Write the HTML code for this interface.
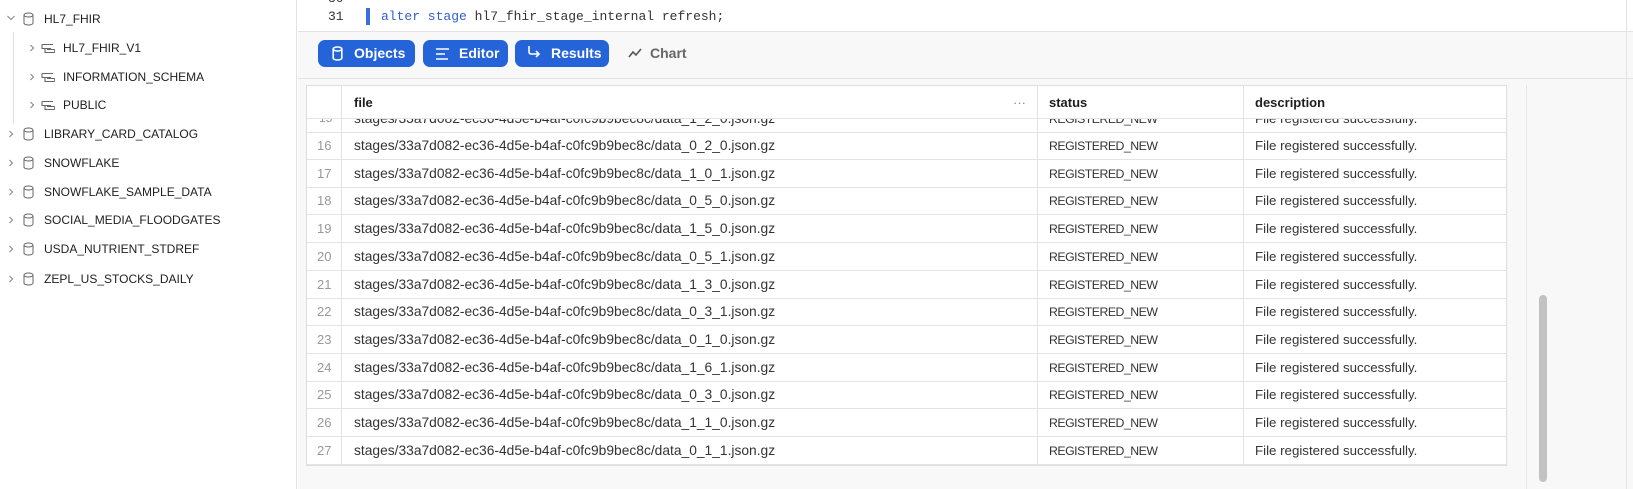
<!DOCTYPE html>
<html><head><meta charset="utf-8"><style>
*{box-sizing:border-box;margin:0;padding:0}
body{width:1633px;height:489px;overflow:hidden;background:#fff;font-family:"Liberation Sans",sans-serif;font-size:12px;color:#1e1e1e;position:relative}
.side{position:absolute;left:0;top:0;width:297px;height:489px;background:#fff;border-right:1px solid #e3e3e3}
.it{position:absolute;height:20px;line-height:20px;font-size:12px;color:#1e1e1e}
.chev{position:absolute}
.main{position:absolute;left:298px;top:0;right:0;bottom:0;background:#f8f8f8}
.editor{position:absolute;left:0;top:0;right:0;height:32px;background:#fff;border-bottom:1px solid #e3e3e3}
.btn{position:absolute;top:40px;height:27px;border-radius:7px;background:#2563d9;color:#fff;font-weight:bold;font-size:14px;line-height:27px;padding-left:36px}
.tbl{position:absolute;left:306px;top:85px;width:1201px;height:381px;background:#fff;border:1px solid #dedede;overflow:hidden}
.row{position:absolute;left:0;width:1201px;height:28px;border-bottom:1px solid #e3e3e3;font-size:12px;line-height:27px}
.row span{position:absolute;top:0;white-space:nowrap;line-height:27px}
.row .f{font-size:13.8px}
.row .s{font-size:12.3px;letter-spacing:-0.5px;top:1px}
.row .d{font-size:13.3px}
.vl{position:absolute;top:0;bottom:0;width:1px;background:#e3e3e3}
</style></head><body>
<svg width="0" height="0" style="position:absolute"><defs>
<symbol id="db" viewBox="0 0 11 14"><ellipse cx="5.5" cy="3" rx="4.5" ry="2" fill="none" stroke="#666"/><path d="M1 3v8c0 1.2 2 2 4.5 2s4.5-.8 4.5-2V3" fill="none" stroke="#666"/></symbol>
<symbol id="sc" viewBox="0 0 14 12"><path d="M1 1.5h11M1 1.5v4h9M4 5.5v4h9c1 0 1-3 0-3H6" fill="none" stroke="#666" stroke-width="1.1"/></symbol>
<symbol id="cr" viewBox="0 0 8 10"><path d="M2.5 2l3 3-3 3" fill="none" stroke="#888" stroke-width="1.1"/></symbol>
</defs></svg>
<div class="side">
 <svg class="chev" style="left:6px;top:14px" width="10" height="8"><path d="M1.5 2l3.5 3.5L8.5 2" fill="none" stroke="#888" stroke-width="1.1"/></svg>
 <svg style="position:absolute;left:23px;top:12px" width="11" height="14"><use href="#db"/></svg>
 <div class="it" style="left:44px;top:9px">HL7_FHIR</div>
 <div style="position:absolute;left:13px;top:32px;width:1px;height:92px;background:#ddd"></div>
 <svg class="chev" style="left:28px;top:43px" width="8" height="10"><use href="#cr"/></svg><svg style="position:absolute;left:41px;top:43px" width="14" height="12"><use href="#sc"/></svg><div class="it" style="left:63px;top:38px">HL7_FHIR_V1</div>
 <svg class="chev" style="left:28px;top:72px" width="8" height="10"><use href="#cr"/></svg><svg style="position:absolute;left:41px;top:72px" width="14" height="12"><use href="#sc"/></svg><div class="it" style="left:63px;top:67px">INFORMATION_SCHEMA</div>
 <svg class="chev" style="left:28px;top:100px" width="8" height="10"><use href="#cr"/></svg><svg style="position:absolute;left:41px;top:100px" width="14" height="12"><use href="#sc"/></svg><div class="it" style="left:63px;top:95px">PUBLIC</div>
 <svg class="chev" style="left:7px;top:129px" width="8" height="10"><use href="#cr"/></svg><svg style="position:absolute;left:23px;top:127px" width="11" height="14"><use href="#db"/></svg><div class="it" style="left:44px;top:124px">LIBRARY_CARD_CATALOG</div>
 <svg class="chev" style="left:7px;top:158px" width="8" height="10"><use href="#cr"/></svg><svg style="position:absolute;left:23px;top:156px" width="11" height="14"><use href="#db"/></svg><div class="it" style="left:44px;top:153px">SNOWFLAKE</div>
 <svg class="chev" style="left:7px;top:187px" width="8" height="10"><use href="#cr"/></svg><svg style="position:absolute;left:23px;top:185px" width="11" height="14"><use href="#db"/></svg><div class="it" style="left:44px;top:182px">SNOWFLAKE_SAMPLE_DATA</div>
 <svg class="chev" style="left:7px;top:215px" width="8" height="10"><use href="#cr"/></svg><svg style="position:absolute;left:23px;top:213px" width="11" height="14"><use href="#db"/></svg><div class="it" style="left:44px;top:210px">SOCIAL_MEDIA_FLOODGATES</div>
 <svg class="chev" style="left:7px;top:244px" width="8" height="10"><use href="#cr"/></svg><svg style="position:absolute;left:23px;top:242px" width="11" height="14"><use href="#db"/></svg><div class="it" style="left:44px;top:239px">USDA_NUTRIENT_STDREF</div>
 <svg class="chev" style="left:7px;top:274px" width="8" height="10"><use href="#cr"/></svg><svg style="position:absolute;left:23px;top:272px" width="11" height="14"><use href="#db"/></svg><div class="it" style="left:44px;top:269px">ZEPL_US_STOCKS_DAILY</div>
</div>
<div class="main">
 <div class="editor">
  <div style="position:absolute;left:30px;top:-9px;font-family:'Liberation Mono',monospace;font-size:13px;color:#333">30</div>
  <div style="position:absolute;left:30px;top:9px;font-family:'Liberation Mono',monospace;font-size:13px;color:#333">31</div>
  <div style="position:absolute;left:68px;top:8px;width:4px;height:17px;background:#3b6fe0"></div>
  <div style="position:absolute;left:83px;top:9px;font-family:'Liberation Mono',monospace;font-size:13px;color:#333"><span style="color:#2f5fcf">alter stage</span> hl7_fhir_stage_internal refresh;</div>
 </div>
 <div class="btn" style="left:20px;width:97px">Objects<svg style="position:absolute;left:14px;top:6px" width="11" height="15"><ellipse cx="5.5" cy="3" rx="4.3" ry="2" fill="none" stroke="#fff" stroke-width="1.6"/><path d="M1.2 3v9c0 1.2 2 2 4.3 2s4.3-.8 4.3-2V3" fill="none" stroke="#fff" stroke-width="1.6"/></svg></div>
 <div class="btn" style="left:125px;width:85px">Editor<svg style="position:absolute;left:13px;top:8px" width="14" height="12"><path d="M0 1h13M0 6h9M0 11h12" stroke="#fff" stroke-width="1.6"/></svg></div>
 <div class="btn" style="left:217px;width:94px">Results<svg style="position:absolute;left:12px;top:6px" width="14" height="14"><path d="M2 0v6c0 1 1 2 2 2h8M9 5l3 3-3 3" fill="none" stroke="#fff" stroke-width="1.6"/></svg></div>
 <div style="position:absolute;left:330px;top:45px;font-size:14px;font-weight:bold;color:#666"><svg width="14" height="12" style="vertical-align:-1px;margin-right:8px"><path d="M1 10l4-5 3 3 5-6" fill="none" stroke="#555" stroke-width="1.6"/></svg>Chart</div>
 <div style="position:absolute;left:0;right:0;top:78px;height:1px;background:#e3e3e3"></div>
 <div style="position:absolute;left:1228px;top:85px;width:1px;bottom:0;background:#e6e6e6"></div>
 <div style="position:absolute;left:1328px;top:0;width:1px;bottom:0;background:#e3e3e3"></div>
 <div style="position:absolute;left:1241px;top:295px;width:8px;height:187px;border-radius:4px;background:#c2c2c2"></div>
</div>
<div class="tbl">
 <div class="row" style="top:19px;color:#333;z-index:0"><span style="left:12px;color:#999">15</span><span class="f" style="left:47px">stages/33a7d082-ec36-4d5e-b4af-c0fc9b9bec8c/data_1_2_0.json.gz</span><span class="s" style="left:742px">REGISTERED_NEW</span><span class="d" style="left:948px">File registered successfully.</span></div>
 <div class="row" style="top:0;height:33px;background:#fff;z-index:1;line-height:33px;font-weight:bold;font-size:13px"><span style="left:47px;line-height:33px">file</span><span style="left:706px;color:#888;font-weight:normal;line-height:33px">···</span><span style="left:742px;line-height:33px">status</span><span style="left:948px;line-height:33px">description</span></div>
 <div id="rows"></div>
 <div class="vl" style="left:34px;z-index:2"></div><div class="vl" style="left:730px;z-index:2"></div><div class="vl" style="left:936px;z-index:2"></div>
</div>
<script>
var f=["0_2_0","1_0_1","0_5_0","1_5_0","0_5_1","1_3_0","0_3_1","0_1_0","1_6_1","0_3_0","1_1_0","0_1_1"],h="";
for(var i=0;i<12;i++){h+='<div class="row" style="top:'+(46+i*27.7)+'px;color:#333"><span style="left:10px;color:#999;font-size:13px">'+(16+i)+'</span><span class="f" style="left:47px">stages/33a7d082-ec36-4d5e-b4af-c0fc9b9bec8c/data_'+f[i]+'.json.gz</span><span class="s" style="left:742px">REGISTERED_NEW</span><span class="d" style="left:948px">File registered successfully.</span></div>';}
document.getElementById("rows").innerHTML=h;
</script>
</body></html>
